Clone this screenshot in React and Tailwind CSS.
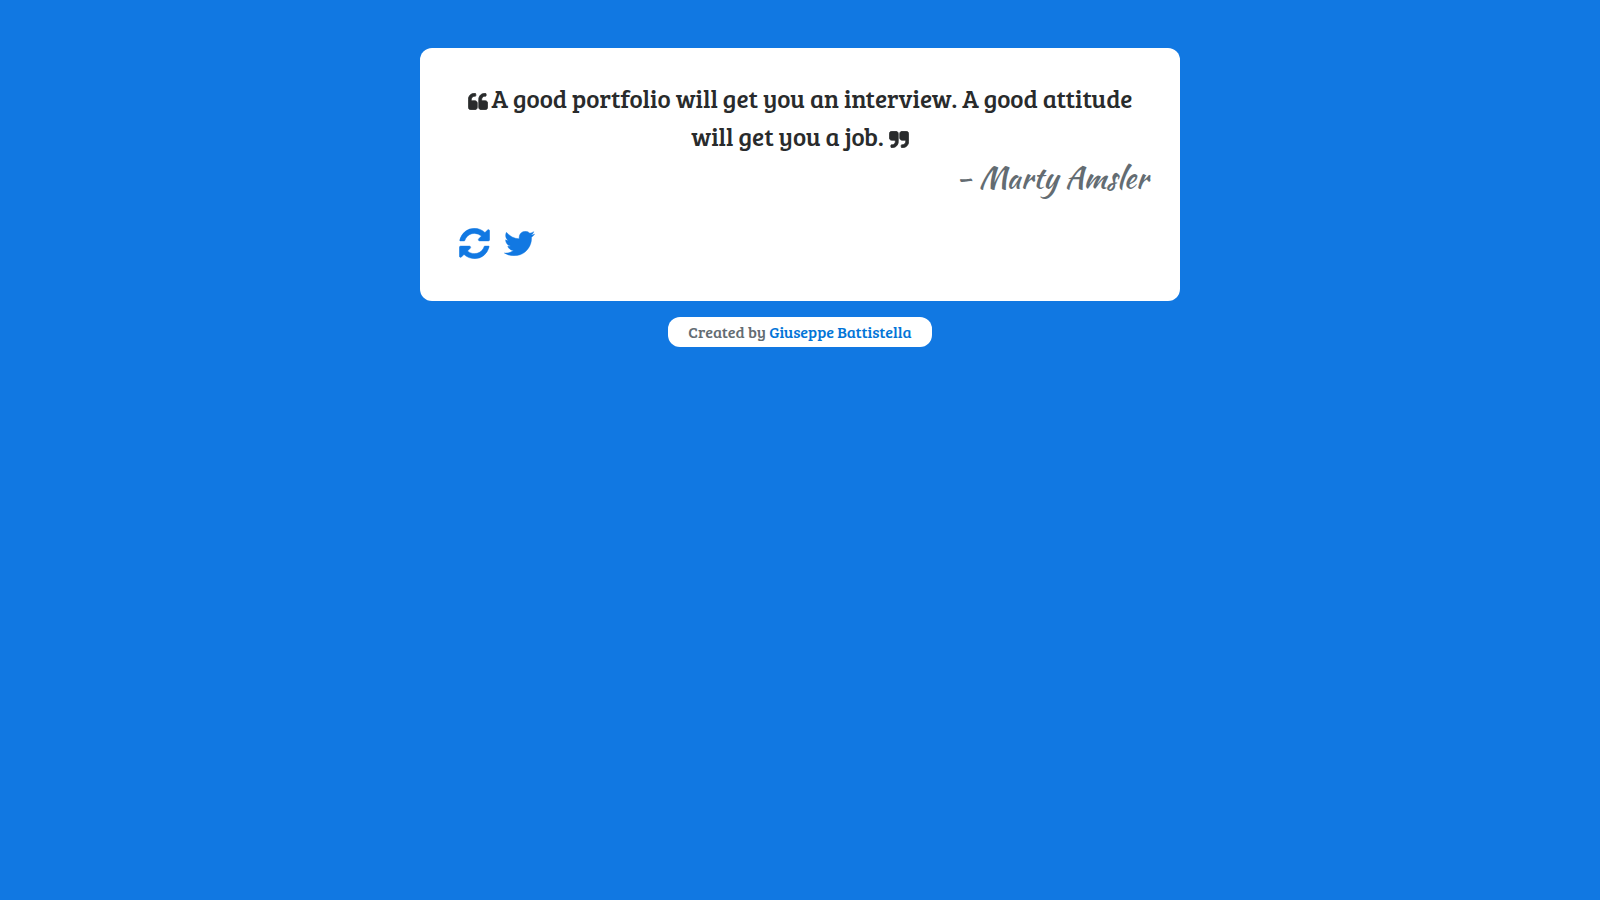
const QUOTE_LEFT =
  "M832 960v384q0 80-56 136t-136 56h-384q-80 0-136-56t-56-136v-704q0-104 40.5-198.5t109.5-163.5 163.5-109.5 198.5-40.5h64q26 0 45 19t19 45v128q0 26-19 45t-45 19h-64q-106 0-181 75t-75 181v32q0 40 28 68t68 28h224q80 0 136 56t56 136zm896 0v384q0 80-56 136t-136 56h-384q-80 0-136-56t-56-136v-704q0-104 40.5-198.5t109.5-163.5 163.5-109.5 198.5-40.5h64q26 0 45 19t19 45v128q0 26-19 45t-45 19h-64q-106 0-181 75t-75 181v32q0 40 28 68t68 28h224q80 0 136 56t56 136z";
const QUOTE_RIGHT =
  "M832 320v704q0 104-40.5 198.5t-109.5 163.5-163.5 109.5-198.5 40.5h-64q-26 0-45-19t-19-45v-128q0-26 19-45t45-19h64q106 0 181-75t75-181v-32q0-40-28-68t-68-28h-224q-80 0-136-56t-56-136v-384q0-80 56-136t136-56h384q80 0 136 56t56 136zm896 0v704q0 104-40.5 198.5t-109.5 163.5-163.5 109.5-198.5 40.5h-64q-26 0-45-19t-19-45v-128q0-26 19-45t45-19h64q106 0 181-75t75-181v-32q0-40-28-68t-68-28h-224q-80 0-136-56t-56-136v-384q0-80 56-136t136-56h384q80 0 136 56t56 136z";
const REFRESH =
  "M1639 1056q0 5-1 7-64 268-268 434.5t-478 166.5q-146 0-282.5-55t-243.5-157l-129 129q-19 19-45 19t-45-19-19-45v-448q0-26 19-45t45-19h448q26 0 45 19t19 45-19 45l-137 137q71 66 161 102t187 36q134 0 250-65t186-179q11-17 53-117 8-23 30-23h192q13 0 22.5 9.5t9.5 22.5zm25-800v448q0 26-19 45t-45 19h-448q-26 0-45-19t-19-45 19-45l138-138q-148-137-349-137-134 0-250 65t-186 179q-11 17-53 117-8 23-30 23h-199q-13 0-22.5-9.5t-9.5-22.5v-7q65-268 270-434.5t480-166.5q146 0 284 55.5t245 156.5l130-129q19-19 45-19t45 19 19 45z";
const TWITTER =
  "M1684 408q-67 98-162 167 1 14 1 42 0 130-38 259.5t-115.5 248.5-184.5 210.5-258 146-323 54.5q-271 0-496-145 35 4 78 4 225 0 401-138-105-2-188-64.5t-114-159.5q33 5 61 5 43 0 85-11-112-23-185.5-111.5t-73.5-205.5v-4q68 38 146 41-66-44-105-115t-39-154q0-88 44-163 121 149 294.5 238.5t371.5 99.5q-8-38-8-74 0-134 94.5-228.5t228.5-94.5q140 0 236 102 109-21 205-78-37 115-142 178 93-10 186-50z";

function Icon({ path, viewBox, className, strokeWidth }) {
  return (
    <svg
      viewBox={viewBox}
      className={className}
      fill="currentColor"
      stroke="currentColor"
      strokeWidth={strokeWidth}
      aria-hidden="true"
    >
      <path d={path} />
    </svg>
  );
}

export default function App() {
  return (
    <div className="flex min-h-screen flex-col items-center gap-4 bg-[#1178e2] px-4 py-12 font-['Bree_Serif','DejaVu_Serif',serif]">
      <main className="w-full max-w-[760px] rounded-xl bg-white px-7 pt-8 pb-[42px]">
        <blockquote className="px-3">
          <p className="text-center text-[25px] leading-normal text-[#292b2c]">
            <Icon path={QUOTE_LEFT} viewBox="32 96 1728 1472" strokeWidth={64} className="mr-1 inline h-[17px] w-5" />
            A good portfolio will get you an interview. A good attitude will get you a job.{" "}
            <Icon path={QUOTE_RIGHT} viewBox="32 96 1728 1472" strokeWidth={64} className="inline h-[17px] w-5" />
          </p>
        </blockquote>
        <p className="pr-1 text-right font-['Kaushan_Script','Liberation_Serif',cursive] text-3xl leading-normal text-[#636c72]">
          - Marty Amsler
        </p>
        <div className="mt-7 flex items-center gap-3.5 pl-[11px] text-[#1178e2]">
          <button type="button" aria-label="New quote" className="cursor-pointer">
            <Icon path={REFRESH} viewBox="112 112 1568 1568" strokeWidth={20} className="size-[31px]" />
          </button>
          <a href="https://twitter.com/intent/tweet" aria-label="Tweet this quote">
            <Icon path={TWITTER} viewBox="98 246 1596 1300" strokeWidth={20} className="h-[25px] w-[31px]" />
          </a>
        </div>
      </main>
      <footer className="rounded-xl bg-white px-5 text-base leading-[30px] text-[#636c72]">
        Created by{" "}
        <a href="#" className="text-[#0275d8]">
          Giuseppe Battistella
        </a>
      </footer>
    </div>
  );
}
